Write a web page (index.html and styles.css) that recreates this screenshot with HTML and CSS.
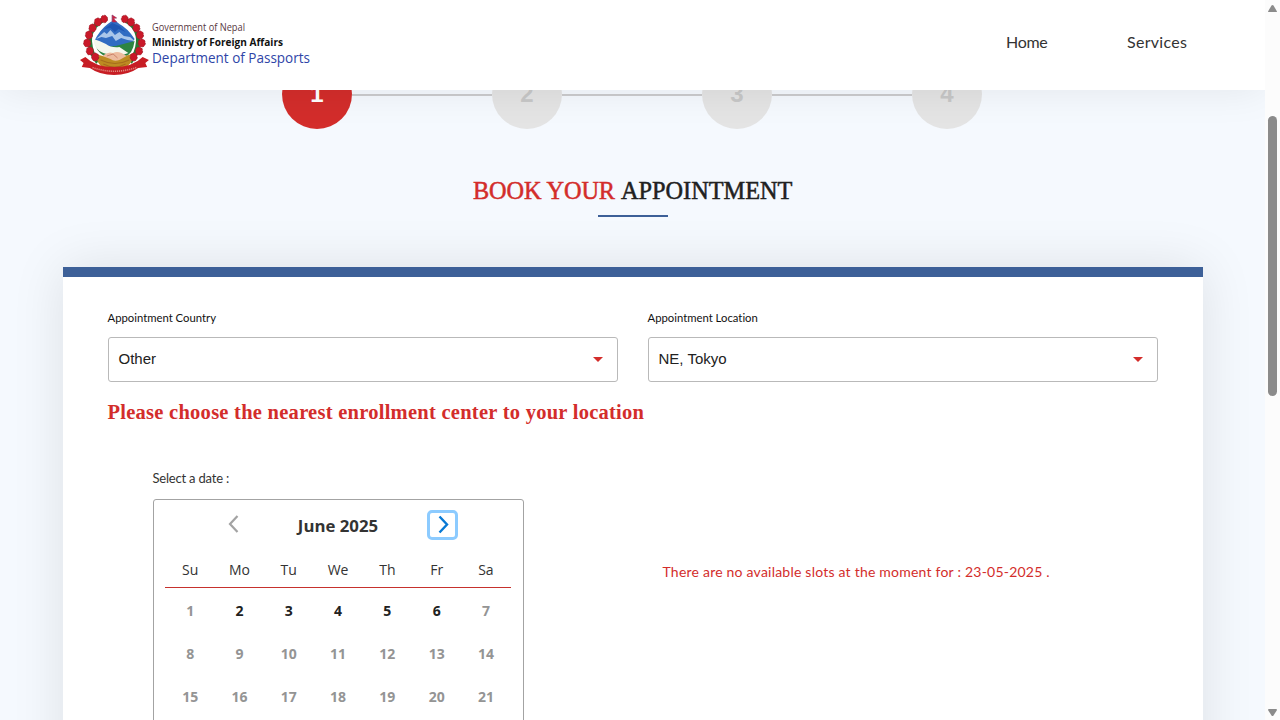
FILE: index.html
```html
<!DOCTYPE html>
<html lang="en">
<head>
<meta charset="utf-8">
<title>Department of Passports</title>
<link rel="stylesheet" href="styles.css">
</head>
<body>
<div class="page">
  <header class="header">
    <svg class="logo" width="240" height="70" viewBox="0 0 240 70">
      <g transform="scale(.895 1)">
      <g fill="none" stroke="#287a35" stroke-width="5">
        <path d="M27 9Q10 17 11 32Q12 44 20 52M49 9Q66 17 65 32Q64 44 56 52"/>
      </g>
      <path d="M16 31Q22 20 31 14Q38 8 44 14Q53 18 61 29L53 41H24Z" fill="#316cc2"/>
      <path d="M18 29L27 22L30 24L34 20L39 25L44 22L49 26L56 27L61 31L53 30L46 28L40 31L36 26L29 28L24 27Z" fill="#a9c6ea"/>
      <path d="M27 19L36 13L44 16L51 22L43 19L39 22L34 18Z" fill="#1f56b3"/>
      <path d="M17 31Q27 38 40 36L61 31Q59 45 49 47L27 46Q17 41 17 31Z" fill="#2d8442"/>
      <path d="M15 29Q23 31 29 34Q35 38 44 37L54 43L41 47L26 43Q16 40 15 29Z" fill="#f5f7ed"/>
      <path d="M17 44Q39 51 61 43Q57 60 38 61Q20 60 17 44Z" fill="#bd8b22"/>
      <path d="M23 50Q39 57 55 50M26 54Q39 60 51 54" fill="none" stroke="#a66c1d" stroke-width="1.2"/>
      <path d="M25 46Q31 41 37 43Q43 40 52 46L44 50Q38 52 34 49Z" fill="#edbb9e"/>
      <path d="M30 46L37 44L42 48" fill="none" stroke="#c97e66" stroke-width="1"/>
      <g fill="#c91829" stroke="#93202a" stroke-width=".8" stroke-dasharray="2 1.500">
        <circle cx="27" cy="9" r="3.8"/><circle cx="20" cy="12" r="4"/><circle cx="14" cy="18" r="4"/><circle cx="10" cy="25" r="4"/><circle cx="8" cy="33" r="4"/><circle cx="11" cy="41" r="4"/><circle cx="17" cy="47" r="4"/>
        <circle cx="50" cy="9" r="3.8"/><circle cx="57" cy="12" r="4"/><circle cx="63" cy="18" r="4"/><circle cx="67" cy="25" r="4"/><circle cx="69" cy="33" r="4"/><circle cx="66" cy="41" r="4"/><circle cx="60" cy="47" r="4"/>
      </g>
      <path d="M36 5V12M36 5L41 8L37.500 8.500L41 12H36Z" fill="#d51f38" stroke="#8f3465" stroke-width=".6"/>
      <path d="M0 50L6 47Q17 57 38 57Q59 57 70 47L77 50L73 53L75 57L65 58Q54 65 38 65Q22 65 11 58L2 57L4 53Z" fill="#c71d24"/>
      <path d="M14 57.500Q38 65 63 57.500" fill="none" stroke="#e08a80" stroke-width="1.600" stroke-dasharray="1.300 1"/>
      </g>
      <text class="logo-gov" x="72" y="20.500" textLength="93" lengthAdjust="spacingAndGlyphs">Government of Nepal</text>
      <text class="logo-ministry" x="72" y="35.500" textLength="131" lengthAdjust="spacingAndGlyphs">Ministry of Foreign Affairs</text>
      <text class="logo-dept" x="72" y="52.500" textLength="158" lengthAdjust="spacingAndGlyphs">Department of Passports</text>
    </svg>
    <nav class="nav"><a class="nav-home">Home</a><a class="nav-services">Services</a></nav>
  </header>
  <main class="main">
    <div class="steps">
      <span class="step step-active">1</span><i class="rail"></i><span class="step">2</span><i class="rail"></i><span class="step">3</span><i class="rail"></i><span class="step">4</span>
    </div>
    <h1 class="title"><span class="title-accent">BOOK YOUR</span> <span class="title-rest">APPOINTMENT</span></h1>
    <section class="card">
      <div class="fields">
        <div class="field"><label class="label">Appointment Country</label><div class="select"><span>Other</span><i class="caret"></i></div></div>
        <div class="field"><label class="label">Appointment Location</label><div class="select"><span>NE, Tokyo</span><i class="caret"></i></div></div>
      </div>
      <p class="notice">Please choose the nearest enrollment center to your location</p>
      <div class="booking">
        <div class="picker">
          <div class="picker-label">Select a date :</div>
          <div class="calendar">
            <div class="cal-head">
              <span class="arrow"><svg width="28" height="28" viewBox="0 0 28 28"><path d="M17.500 6L10 14L17.500 22" fill="none" stroke="#a3a3a3" stroke-width="2.200"/></svg></span>
              <strong class="month">June 2025</strong>
              <span class="arrow arrow-focus"><svg width="28" height="28" viewBox="0 0 28 28"><path d="M10.500 5.500L18 13.500L10.500 21.500" fill="none" stroke="#0879d4" stroke-width="2.400"/></svg></span>
            </div>
            <div class="week weekdays"><span>Su</span><span>Mo</span><span>Tu</span><span>We</span><span>Th</span><span>Fr</span><span>Sa</span></div>
            <div class="week days"><span>1</span><span class="open">2</span><span class="open">3</span><span class="open">4</span><span class="open">5</span><span class="open">6</span><span>7</span></div>
            <div class="week days"><span>8</span><span>9</span><span>10</span><span>11</span><span>12</span><span>13</span><span>14</span></div>
            <div class="week days"><span>15</span><span>16</span><span>17</span><span>18</span><span>19</span><span>20</span><span>21</span></div>
          </div>
        </div>
        <p class="slots">There are no available slots at the moment for : 23-05-2025 .</p>
      </div>
    </section>
  </main>
</div>
<div class="scrollbar">
  <svg width="9" height="8" viewBox="0 0 9 8"><path d="M0 6.500L3.500 .5Q4.500 -.5 5.500 .5L9 6.500Q9 7 8 7H1Q0 7 0 6.500Z" fill="#8b8b8b"/></svg>
  <i class="thumb"></i>
  <svg class="down" width="9" height="8" viewBox="0 0 9 8"><path d="M0 1Q0 0 1 0H8Q9 0 9 1L5.500 6.500Q4.500 7.500 3.500 6.500Z" fill="#8b8b8b"/></svg>
</div>
</body>
</html>
```
FILE: styles.css
```css
* { box-sizing: border-box; }
body {
  margin: 0;
  display: flex;
  height: 720px;
  overflow: hidden;
  background: #f5f9fe;
  font-family: Lato, "Liberation Sans", sans-serif;
  font-variant-ligatures: none;
  color: #212121;
}
.page { width: 1265px; height: 720px; overflow: hidden; }
.header {
  position: relative;
  z-index: 2;
  height: 90px;
  padding: 10px 78px 0 80px;
  display: flex;
  justify-content: space-between;
  background: #fff;
  box-shadow: 0 0 40px rgba(0, 0, 0, 0.08);
}
.logo { flex: none; font-family: "Open Sans", sans-serif; }
.logo-gov { font-size: 10.2px; fill: #573842; }
.logo-ministry { font-size: 11px; font-weight: 700; fill: #111; }
.logo-dept { font-size: 14px; font-weight: 500; fill: #2e45a7; }
.nav { display: flex; gap: 79px; padding-top: 22px; font-size: 16px; line-height: 20px; color: #333; }
.nav-home { width: 42px; letter-spacing: -0.3px; }
.nav-services { width: 60px; letter-spacing: 0.3px; }
.steps { display: flex; align-items: center; width: 700px; margin: -31px 0 0 282px; }
.step {
  width: 70px;
  height: 70px;
  border-radius: 50%;
  background: #e4e4e4;
  color: #c7c7c7;
  font: 700 24px/70px "Liberation Sans", Arial, sans-serif;
  text-align: center;
}
.step-active { background: #d32d2b; color: #fff; }
.rail { width: 140px; height: 2px; margin-top: 2px; background: #cbcbcd; }
.title {
  display: flex;
  justify-content: center;
  gap: 6px;
  position: relative;
  height: 42px;
  margin: 46px 0 50px;
  font-family: "Liberation Serif", serif;
  font-size: 24.3px;
  line-height: 32px;
  font-weight: 400;
  -webkit-text-stroke: 0.5px currentColor;
  white-space: nowrap;
}
.title::after {
  content: "";
  position: absolute;
  bottom: 0;
  left: calc(50% - 35px);
  width: 70px;
  height: 2px;
  background: #3d6098;
}
.title-accent { color: #d32d2b; width: 142px; letter-spacing: -0.1px; }
.title-rest { width: 171px; }
.card {
  width: 1140px;
  height: 600px;
  margin: 0 auto;
  padding: 33px 45px 0;
  border-top: 10px solid #3d6098;
  background: #fff;
  box-shadow: 0 0 50px rgba(0, 0, 0, 0.1);
}
.fields { display: grid; grid-template-columns: 510px 510px; gap: 30px; }
.label { display: block; height: 27px; font-size: 11.3px; line-height: 16px; color: #111; }
.select {
  display: flex;
  align-items: center;
  justify-content: space-between;
  height: 45px;
  padding: 0 14px 0 10px;
  border: 1px solid #b9b9b9;
  border-radius: 3px;
  font: 15px/20px "Liberation Sans", Arial, sans-serif;
}
.select span { padding-bottom: 2px; }
.caret { border: 5px solid transparent; border-top-color: #d32d2b; border-bottom: 0; }
.notice {
  margin: 17px 0 0;
  color: #d32d2b;
  font-family: "Liberation Serif", serif;
  font-size: 20.5px;
  line-height: 26px;
  font-weight: 700;
  letter-spacing: 0.26px;
  white-space: nowrap;
}
.booking { display: flex; padding-left: 45px; margin-top: 44px; }
.picker { width: 371px; }
.picker-label { height: 30px; font-size: 13px; line-height: 18px; letter-spacing: -0.2px; color: #333; }
.calendar { height: 340px; padding: 10px 11px; border: 1px solid #a3a3a3; border-radius: 3px; font-family: "Open Sans", sans-serif; }
.cal-head { display: flex; align-items: center; justify-content: space-between; width: 240px; height: 30px; margin: 0 auto 0 53px; }
.arrow { width: 31px; height: 30px; padding: 0 2px; }
.arrow-focus { padding: 0; border: 3px solid #8ccbff; border-radius: 5px; }
.arrow-focus svg { display: block; margin: -2px -1px; }
.month { font-size: 16.8px; line-height: 30px; color: #333; padding: 2px 0 0 1px; }
.week { display: grid; grid-template-columns: repeat(7, 49.3px); width: 346px; text-align: center; font-size: 14px; }
.week span { padding-left: 2px; }
.weekdays { height: 38px; margin-top: 10px; border-bottom: 1px solid #c6312d; line-height: 40px; color: #333; }
.days { height: 43px; font-weight: 700; line-height: 46px; color: #949494; }
.open { color: #212121; }
.slots { margin: 94px 0 0 139px; color: #d32d2b; font-size: 14px; line-height: 18px; letter-spacing: 0.22px; white-space: nowrap; }
.scrollbar { display: flex; flex-direction: column; width: 15px; height: 720px; padding: 5px 0 3px 3px; background: #fcfcfc; }
.thumb { display: block; width: 9px; height: 280px; margin-top: 103px; border-radius: 5px; background: #8b8b8b; }
.down { margin-top: auto; }
```
